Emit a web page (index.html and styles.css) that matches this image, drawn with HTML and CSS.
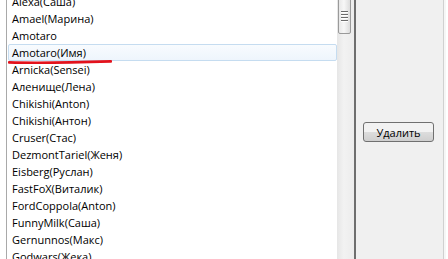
FILE: index.html
```html
<!DOCTYPE html>
<html>
<head>
  <title>Users</title>
  <link rel="stylesheet" href="styles.css">
</head>
<body>
  <div class="window">
    <div class="list">
      <ul class="items">
        <li>Alexa(Саша)</li>
        <li>Amael(Марина)</li>
        <li>Amotaro</li>
        <li class="selected">Amotaro(Имя)</li>
        <li>Arnicka(Sensei)</li>
        <li>Аленище(Лена)</li>
        <li>Chikishi(Anton)</li>
        <li>Chikishi(Антон)</li>
        <li>Cruser(Стас)</li>
        <li>DezmontTariel(Женя)</li>
        <li>Eisberg(Руслан)</li>
        <li>FastFoX(Виталик)</li>
        <li>FordCoppola(Anton)</li>
        <li>FunnyMilk(Саша)</li>
        <li>Gernunnos(Макс)</li>
        <li>Godwars(Жека)</li>
      </ul>
      <svg class="mark" width="104" height="6" viewBox="0 0 104 6">
        <path d="M1 3.4 C 30 4.3, 65 3.6, 103 2.4" stroke="#e3121c" stroke-width="2.6" fill="none" stroke-linecap="round"/>
      </svg>
    </div>
    <div class="scroll">
      <div class="thumb">
        <span></span><span></span><span></span><span></span>
      </div>
    </div>
    <div class="panel">
      <button class="btn">Удалить</button>
    </div>
    <div class="edge"></div>
  </div>
</body>
</html>
```

FILE: styles.css
```css
body {
  margin: 0;
  font-family: "Open Sans", "Noto Sans", sans-serif;
  font-size: 11px;
  color: #000;
  background: #fff;
}
.window {
  display: flex;
  height: 259px;
  overflow: hidden;
}
.list {
  position: relative;
  width: 330px;
  margin-left: 6px;
  border-left: 1px solid #a9a9a9;
  background: #fff;
  overflow: hidden;
}
.items {
  list-style: none;
  margin: -7px 0 0 0;
  padding: 0;
}
.items li {
  height: 17px;
  line-height: 17px;
  padding-left: 4px;
  margin-left: 1px;
  white-space: nowrap;
  box-sizing: border-box;
}
.items li.selected {
  border: 1px solid #c5dcf0;
  border-radius: 2px;
  padding-left: 3px;
  line-height: 15px;
  background: linear-gradient(#f8fbfe, #eef5fc);
}
.mark {
  position: absolute;
  left: 1px;
  top: 59px;
}
.scroll {
  width: 17px;
  background: linear-gradient(90deg, #e6e6e6, #f2f2f2 40%, #ececec);
  position: relative;
}
.thumb {
  position: absolute;
  left: 1px;
  top: -6px;
  width: 13px;
  height: 40px;
  border: 1px solid #9a9a9a;
  border-radius: 2px;
  background: linear-gradient(90deg, #e8e8e8, #f7f7f7 45%, #dcdcdc);
  display: flex;
  flex-direction: column;
  align-items: center;
  padding-top: 16px;
  box-sizing: border-box;
  gap: 1px;
}
.thumb span {
  width: 7px;
  height: 1px;
  background: #6c6c6c;
  border-bottom: 1px solid #fff;
}
.panel {
  width: 89px;
  border-left: 2px solid #6e6e6e;
  background: #f0f0f0;
  padding: 122px 0 0 7px;
  box-sizing: border-box;
}
.btn {
  width: 71px;
  height: 20px;
  font-family: inherit;
  font-size: 11px;
  padding: 0;
  border: 1px solid #707070;
  border-radius: 3px;
  background: linear-gradient(#f2f2f2 50%, #dddddd 50%, #cfcfcf);
  color: #000;
}
.edge {
  width: 2px;
  border-left: 1px solid #d0d0d0;
  background: #f6f6f6;
}
```
